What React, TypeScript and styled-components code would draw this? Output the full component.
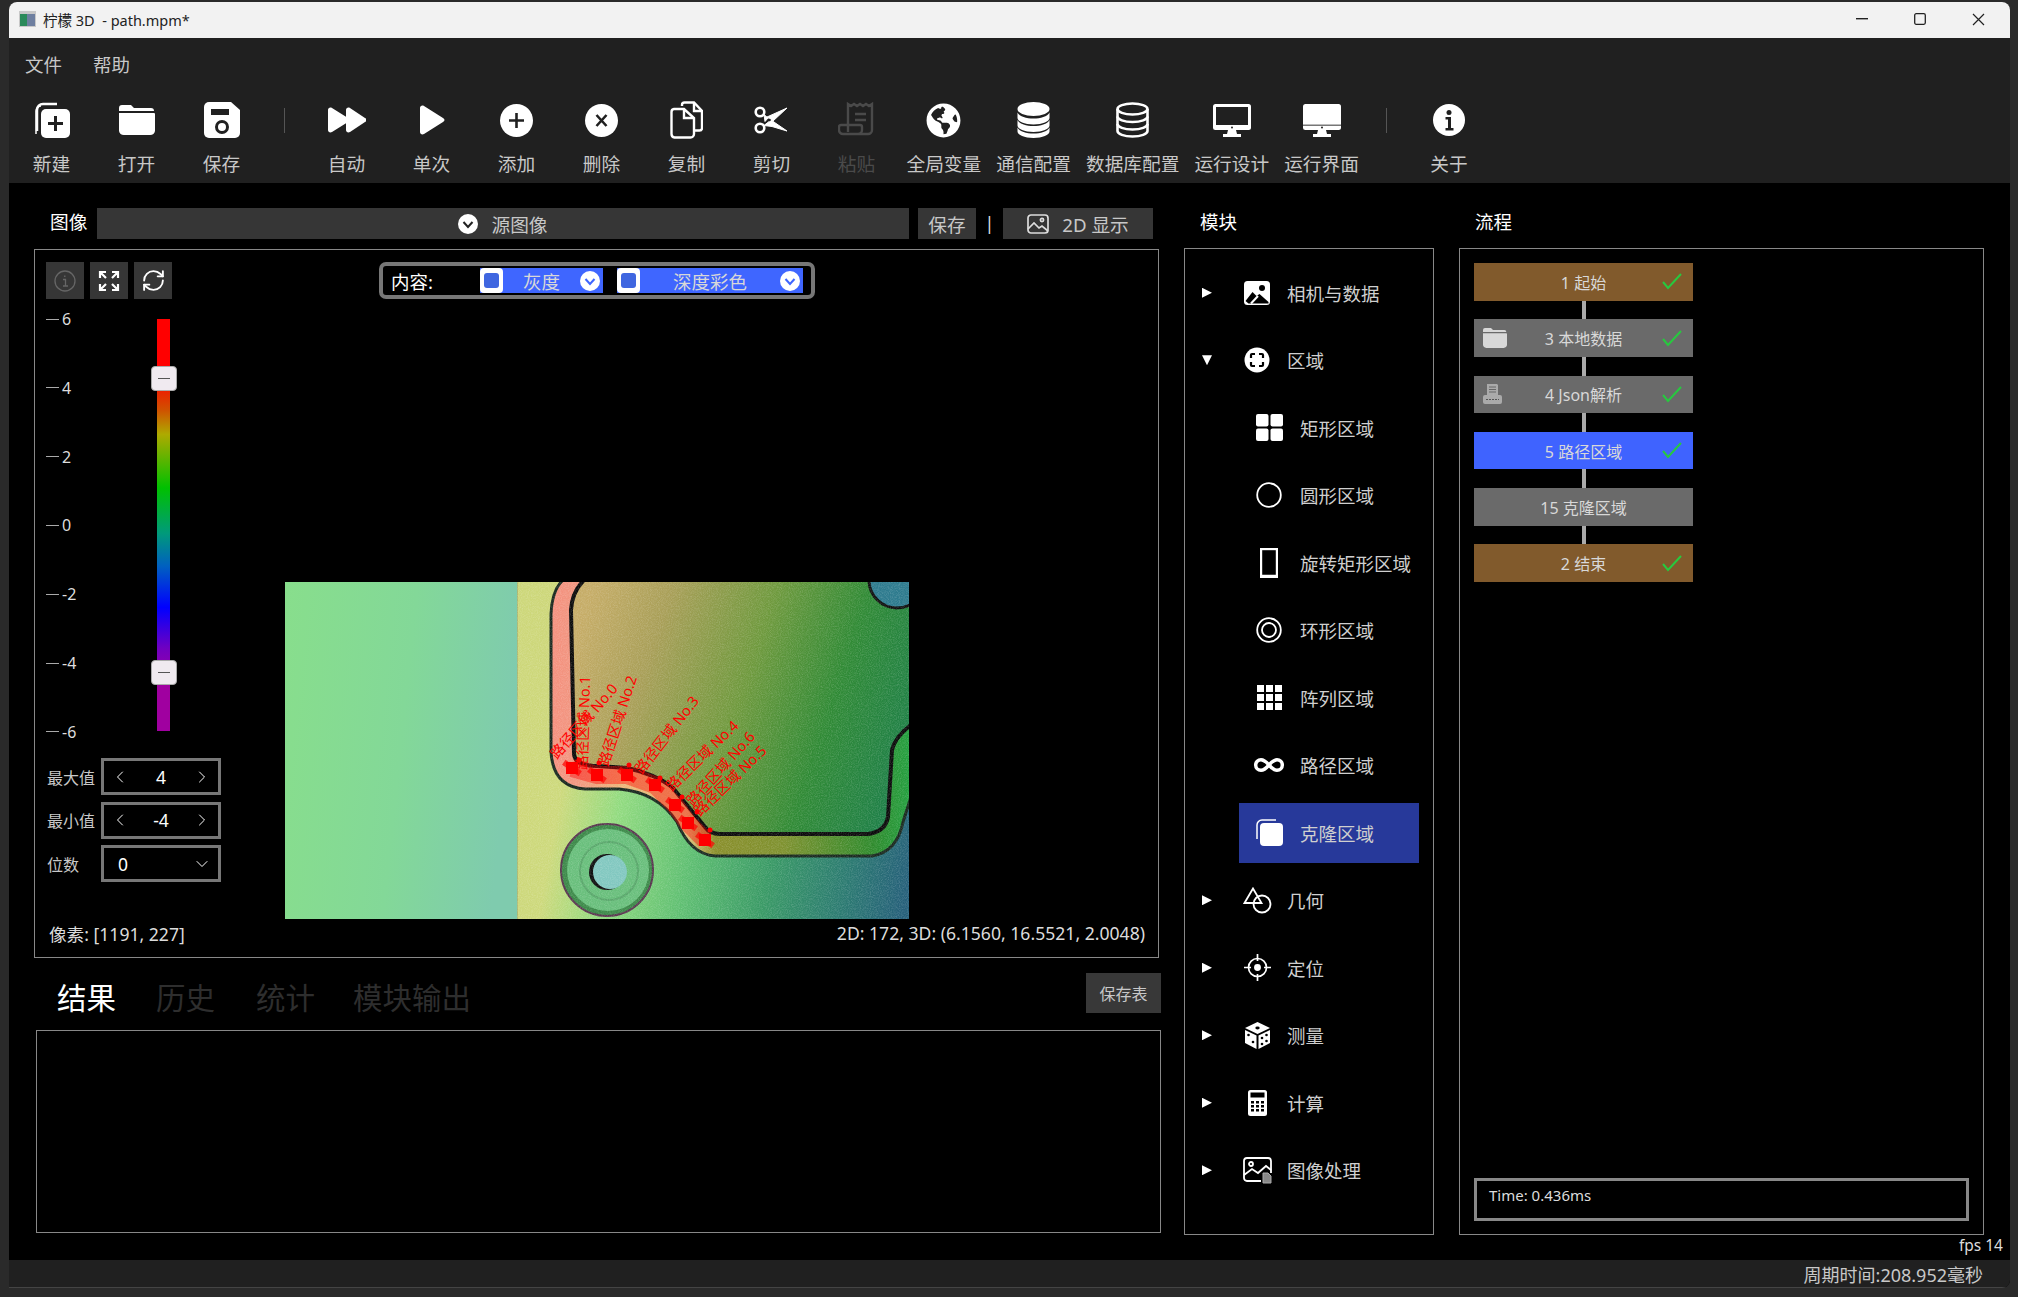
import React from 'react';
import styled, { createGlobalStyle } from 'styled-components';
import { ChevronDown, ChevronLeft, ChevronRight, Infinity as InfinityIcon, RefreshCw } from 'lucide-react';
import { FaGlobeAmericas } from 'react-icons/fa';

const GlobalStyle = createGlobalStyle`
  html, body { margin: 0; padding: 0; background: #2a2a2a; overflow: hidden; }
  body { font-family: "Noto Sans", "Noto Sans CJK SC", sans-serif; }
  * { box-sizing: border-box; }
`;

const Screen = styled.div`
  width: 2018px;
  height: 1297px;
  padding: 2px 8px 9px 9px;
  background: #2a2a2a;
`;

const Window = styled.div`
  height: 100%;
  display: flex;
  flex-direction: column;
  background: #000;
  border-radius: 8px 8px 8px 0;
  overflow: hidden;
`;

const TitleBar = styled.div`
  height: 36px;
  flex: none;
  display: flex;
  align-items: center;
  padding: 0 3px 2px 10px;
  background: #f2f2f2;
  color: #222;
  font-size: 14.5px;
`;

const TitleText = styled.span`
  margin-left: 7px;
  flex: 1;
  white-space: pre;
`;

const WinButton = styled.div`
  width: 58px;
  height: 34px;
  display: flex;
  align-items: center;
  justify-content: center;
`;

const Chrome = styled.div`
  height: 145px;
  flex: none;
  background: #202020;
  color: #c8c8c8;
`;

const MenuRow = styled.div`
  height: 45px;
  display: flex;
  align-items: center;
  padding: 6px 0 0 16px;
  gap: 31px;
  font-size: 18.5px;
`;

const ToolRow = styled.div`
  display: flex;
  padding-top: 17px;
`;

const ToolButton = styled.div<{ $off?: boolean }>`
  min-width: 85px;
  padding: 0 7.5px;
  display: flex;
  flex-direction: column;
  align-items: center;
  color: ${(p) => (p.$off ? '#4a4a4a' : '#c8c8c8')};
  font-size: 18.7px;
  line-height: 24px;
  white-space: nowrap;
  svg { display: block; }
`;

const ToolIcon = styled.div<{ $off?: boolean }>`
  height: 40px;
  margin-bottom: 12px;
  display: flex;
  align-items: center;
  justify-content: center;
  color: ${(p) => (p.$off ? '#4a4a4a' : '#fff')};
`;

const ToolSep = styled.div`
  width: 40px;
  height: 25px;
  margin-top: 8px;
  display: flex;
  justify-content: center;
  &::after { content: ''; width: 1px; background: #555; }
`;

const Main = styled.div`
  flex: 1;
  display: flex;
  flex-direction: column;
  min-height: 0;
  padding-top: 25px;
`;

const Columns = styled.div`
  height: 1027px;
  display: grid;
  grid-template-columns: 1127px 273px 550px;
  padding-left: 25px;
`;

const LeftCol = styled.div`
  display: flex;
  flex-direction: column;
`;

const HeadRow = styled.div`
  height: 31px;
  display: flex;
  align-items: stretch;
  color: #c8c8c8;
  font-size: 18.7px;
`;

const HeadLabel = styled.div`
  width: 63px;
  padding-left: 16px;
  color: #fff;
  line-height: 28px;
`;

const DarkButton = styled.div<{ $w?: number; $grow?: boolean; $ml?: number }>`
  ${(p) => (p.$grow ? 'flex: 1;' : `width: ${p.$w}px;`)}
  margin-left: ${(p) => p.$ml || 0}px;
  display: flex;
  align-items: center;
  justify-content: center;
  gap: 13px;
  background: #363636;
`;

const Pipe = styled.div`
  width: 27px;
  text-align: center;
  line-height: 29px;
  color: #ddd;
`;

const HeadEnd = styled.div`
  width: 8px;
`;

const Viewer = styled.div`
  width: 1125px;
  height: 709px;
  margin-top: 10px;
  padding: 12px 0 0 11px;
  border: 1px solid #888;
  display: flex;
  flex-direction: column;
`;

const ViewTop = styled.div`
  height: 37px;
  display: flex;
  flex: none;
`;

const SquareButton = styled.div<{ $off?: boolean }>`
  width: 38px;
  height: 37px;
  margin-right: 6px;
  display: flex;
  align-items: center;
  justify-content: center;
  background: #363636;
  color: ${(p) => (p.$off ? '#666' : '#fff')};
`;

const ContentBox = styled.div`
  width: 436px;
  margin-left: 201px;
  display: flex;
  align-items: center;
  padding-left: 8px;
  border: 4px solid #777;
  border-radius: 7px;
  color: #fff;
  font-size: 18.5px;
`;

const ContentLabel = styled.span`
  width: 89px;
`;

const BlueCombo = styled.div<{ $w: number; $mr?: number }>`
  width: ${(p) => p.$w}px;
  margin-right: ${(p) => p.$mr || 0}px;
  height: 25px;
  padding-right: 3px;
  display: flex;
  align-items: center;
  background: #3f66ff;
  color: #d8d8d8;
  font-size: 18.5px;
`;

const ComboCheck = styled.div`
  width: 23px;
  height: 25px;
  padding: 5px 4px;
  background: #fff;
  border-radius: 4px;
  &::after {
    content: '';
    display: block;
    height: 15px;
    border-radius: 3px;
    background: #3f66e0;
  }
`;

const ComboText = styled.span`
  flex: 1;
  text-align: center;
`;

const ViewBody = styled.div`
  height: 620px;
  flex: none;
  display: flex;
`;

const Rail = styled.div`
  width: 175px;
  padding-top: 10px;
  font-size: 16px;
  color: #ddd;
`;

const ScaleArea = styled.div`
  height: 433px;
  display: flex;
`;

const Ticks = styled.div`
  width: 111px;
  display: flex;
  flex-direction: column;
  justify-content: space-between;
`;

const Tick = styled.div`
  height: 20px;
  display: flex;
  align-items: center;
  gap: 3px;
  line-height: 20px;
  &::before { content: ''; width: 13px; height: 1px; background: #aaa; }
`;

const SliderTrack = styled.div`
  position: relative;
  width: 13px;
  height: 412px;
  margin-top: 10px;
  background: linear-gradient(
    to bottom,
    #f00 0%,
    #f00 14%,
    #d05000 22%,
    #aeaa00 28%,
    #00c000 41%,
    #009a7a 52%,
    #0060c0 60%,
    #0000ff 70%,
    #7000c0 80%,
    #a000a0 88%,
    #a000a0 100%
  );
`;

const SliderHandle = styled.div<{ $top: number }>`
  position: absolute;
  left: -6px;
  top: ${(p) => p.$top}px;
  width: 26px;
  height: 25px;
  border-radius: 4px;
  border: 1px solid #aaa;
  background: #f0eaf0;
  display: flex;
  align-items: center;
  justify-content: center;
  &::after { content: ''; width: 12px; height: 1px; background: #555; }
`;

const FieldStack = styled.div`
  margin-top: 16px;
  display: flex;
  flex-direction: column;
  gap: 6.5px;
`;

const FieldRow = styled.div`
  display: flex;
  align-items: center;
  color: #c8c8c8;
`;

const FieldLabel = styled.span`
  width: 55px;
  padding-left: 1px;
`;

const FieldBox = styled.div`
  width: 120px;
  height: 37px;
  padding: 0 6px;
  border: 3px solid #777;
  display: flex;
  align-items: center;
  justify-content: space-between;
  color: #fff;
  font-size: 17.5px;
`;

const ComboValue = styled.span`
  margin-left: 8px;
`;

const PictureFrame = styled.div`
  width: 624px;
  height: 337px;
  margin: 283px 0 0 64px;
`;

const ViewFoot = styled.div`
  height: 28px;
  display: flex;
  align-items: center;
  justify-content: space-between;
  padding: 0 13px 0 3px;
  color: #dcdcdc;
  font-size: 17.6px;
`;

const TabsRow = styled.div`
  height: 40px;
  margin-top: 15px;
  padding-left: 23px;
  display: flex;
  align-items: center;
`;

const Tab = styled.span<{ $on?: boolean; $mr: number }>`
  margin: 9px ${(p) => p.$mr}px 0 0;
  color: ${(p) => (p.$on ? '#fff' : '#2e2e2e')};
  font-size: 29.5px;
  line-height: 34px;
`;

const SaveTable = styled.div`
  width: 75px;
  height: 40px;
  margin-left: auto;
  display: flex;
  align-items: center;
  justify-content: center;
  background: #383838;
  color: #c8c8c8;
  font-size: 16px;
`;

const ResultBox = styled.div`
  height: 203px;
  margin: 17px 0 0 2px;
  border: 1px solid #888;
`;

const TreeCol = styled.div`
  display: flex;
  flex-direction: column;
  margin-left: 23px;
`;

const FlowCol = styled(TreeCol)`
  margin-left: 25px;
`;

const ColTitle = styled.div<{ $x: number }>`
  height: 40px;
  flex: none;
  padding-left: ${(p) => p.$x}px;
  color: #fff;
  font-size: 18.5px;
  line-height: 28px;
`;

const TreePanel = styled.div`
  flex: 1;
  border: 1px solid #888;
  padding-top: 10px;
  display: flex;
  flex-direction: column;
  color: #cfcfcf;
  font-size: 18.5px;
`;

const TreeRow = styled.div`
  height: 67.5px;
  flex: none;
  display: flex;
  align-items: center;
  padding-left: 17px;
`;

const Arrow = styled.div<{ $open?: boolean }>`
  width: 10px;
  height: 10px;
  background: #fff;
  clip-path: ${(p) =>
    p.$open ? 'polygon(0 0, 100% 0, 50% 100%)' : 'polygon(0 0, 100% 50%, 0 100%)'};
`;

const TreeIcon = styled.div`
  width: 40px;
  display: flex;
  justify-content: center;
  color: #fff;
  margin: 0 10px 0 25px;
`;

const ChildRow = styled.div<{ $on?: boolean }>`
  width: 180px;
  height: 60px;
  flex: none;
  margin: 3.75px 0 3.75px 54px;
  padding-left: 10px;
  display: flex;
  align-items: center;
  gap: 11px;
  white-space: nowrap;
  background: ${(p) => (p.$on ? '#27399a' : 'transparent')};
`;

const ChildIcon = styled.div`
  width: 40px;
  display: flex;
  justify-content: center;
  color: #fff;
`;

const FlowPanel = styled.div`
  flex: 1;
  border: 1px solid #888;
  padding: 14px 14px 13px;
  display: flex;
  flex-direction: column;
`;

const FlowList = styled.div`
  flex: 1;
  width: 219px;
  display: flex;
  flex-direction: column;
  align-items: center;
`;

const FlowNode = styled.div<{ $tone: string }>`
  width: 100%;
  height: 37.5px;
  flex: none;
  display: grid;
  grid-template-columns: 1fr auto 1fr;
  align-items: center;
  background: ${(p) => p.$tone};
  color: #d8d8d8;
  font-size: 16px;
`;

const NodeIcon = styled.div`
  padding-left: 9px;
  display: flex;
`;

const NodeCheck = styled.div`
  padding-right: 11px;
  display: flex;
  justify-content: flex-end;
`;

const Link = styled.div`
  width: 4px;
  height: 18.8px;
  flex: none;
  background: #aaa;
`;

const TimeBox = styled.div`
  width: 495px;
  height: 43px;
  padding: 2px 0 0 12px;
  border: 3px solid #888;
  color: #dcdcdc;
  font-size: 15px;
  line-height: 24px;
`;

const FpsRow = styled.div`
  height: 25px;
  padding: 0 7px 0 0;
  text-align: right;
  color: #dcdcdc;
  font-size: 15.5px;
  line-height: 20px;
`;

const StatusBar = styled.div`
  height: 28px;
  flex: none;
  padding-right: 27px;
  display: flex;
  align-items: center;
  justify-content: flex-end;
  background: #202020;
  border-bottom: 1px solid #444;
  color: #c8c8c8;
  font-size: 18px;
`;

const Glyph: React.FC<{ w?: number; h?: number; vb: string; children: React.ReactNode }> = ({ w = 36, h = 36, vb, children }) => (
  <svg width={w} height={h} viewBox={vb} fill="currentColor">{children}</svg>
);

const NewIcon = () => (
  <Glyph vb="0 0 36 36">
    <path d="M3 29V8a6 6 0 0 1 6-6h14" fill="none" stroke="currentColor" strokeWidth="2.5" />
    <path d="M2 32V9a5 5 0 0 1 5-5" fill="none" stroke="currentColor" strokeWidth="1.5" />
    <rect x="7" y="7" width="29" height="29" rx="5" />
    <path d="M21.5 14v15M14 21.5h15" stroke="#202020" strokeWidth="3" />
  </Glyph>
);
const FolderIcon: React.FC<{ size?: number }> = ({ size = 36 }) => (
  <Glyph w={size} h={size} vb="0 0 36 36">
    <path d="M0 9V6a3 3 0 0 1 3-3h9l3 3h17a3 3 0 0 1 3 3z" />
    <path d="M0 11h35a1 1 0 0 1 1 1v17a5 5 0 0 1-5 4H5a5 5 0 0 1-5-4z" />
  </Glyph>
);
const SaveIcon = () => (
  <Glyph vb="0 0 36 36">
    <path d="M5 0h22l9 8v23a5 5 0 0 1-5 5H5a5 5 0 0 1-5-5V5a5 5 0 0 1 5-5z" />
    <rect x="7" y="7" width="18" height="6" fill="#202020" />
    <circle cx="18" cy="25" r="5.5" fill="none" stroke="#202020" strokeWidth="3" />
  </Glyph>
);
const AutoIcon = () => (
  <Glyph w={39} h={26} vb="0 0 39 26">
    <path d="M1 3c0-2 2-3 4-2l16 10c2 1 2 3 0 4L5 25c-2 1-4 0-4-2z" />
    <path d="M19 3c0-2 2-3 4-2l15 10c2 1 2 3 0 4L23 25c-2 1-4 0-4-2z" />
  </Glyph>
);
const PlayIcon = () => (
  <Glyph w={26} h={30} vb="0 0 26 30">
    <path d="M1 3c0-2 2-3 4-2l19 12c2 1 2 3 0 4L5 29c-2 1-4 0-4-2z" />
  </Glyph>
);
const AddIcon = () => (
  <Glyph w={33} h={33} vb="0 0 33 33">
    <circle cx="16.5" cy="16.5" r="16.5" />
    <path d="M16.5 9v15M9 16.5h15" stroke="#202020" strokeWidth="2.6" />
  </Glyph>
);
const RemoveIcon = () => (
  <Glyph w={33} h={33} vb="0 0 33 33">
    <circle cx="16.5" cy="16.5" r="16.5" />
    <path d="M11.5 11l10 11M21.5 11l-10 11" stroke="#202020" strokeWidth="2.6" />
  </Glyph>
);
const CopyIcon = () => (
  <svg width="33" height="38" viewBox="0 0 33 38" fill="none" stroke="currentColor" strokeWidth="2.4">
    <path d="M12 5V4a2.5 2.5 0 0 1 2.5-2.5H24L32 10v17a2.5 2.5 0 0 1-2.5 2.5H25" />
    <path d="M24 2v8h7" />
    <path d="M4 8h10l10 9v16a3.5 3.5 0 0 1-3.5 3.5H4.500A3.500 3.500 0 0 1 1.500 33V11a3 3 0 0 1 2.500-3z" />
    <path d="M14 8v9h9" />
  </svg>
);
const ScissorsIcon = () => (
  <svg width="35" height="28" viewBox="0 0 35 28" fill="none" stroke="currentColor">
    <circle cx="6" cy="6" r="4.300" strokeWidth="2.600" />
    <circle cx="6" cy="22" r="4.300" strokeWidth="2.600" />
    <path d="M10 8.500L14 12l-3 3.500z" fill="currentColor" strokeWidth="1" />
    <path d="M13 11L33 2 19 15z" fill="currentColor" strokeWidth="1" />
    <path d="M10 19.500L17 14l16 11-15-4.500z" fill="currentColor" strokeWidth="1" />
    <circle cx="15.500" cy="14" r="1.300" fill="#202020" stroke="none" />
  </svg>
);
const PasteIcon = () => (
  <svg width="38" height="36" viewBox="0 0 38 36" fill="none" stroke="currentColor" strokeWidth="2.4">
    <path d="M10 30V2l3 2 3-2 3 2 3-2 3 2 3-2 3 2 3-2v26a4 4 0 0 1-4 4H5a4 4 0 0 1-4-4v-3a2 2 0 0 1 2-2h19a2 2 0 0 1 2 2v3a4 4 0 0 1-4 4" />
    <path d="M17 12h11M17 18h11" />
  </svg>
);
const DbSolidIcon = () => (
  <Glyph w={33} h={36} vb="0 0 33 36">
    <ellipse cx="16.500" cy="7" rx="16" ry="7" />
    <path d="M0.500 10.500c2 4 9 6 16 6s14-2 16-6v5.500c0 3.500-7 6.500-16 6.500s-16-3-16-6.500z" />
    <path d="M0.500 18c2 4 9 6 16 6s14-2 16-6v5.500c0 3.500-7 6.500-16 6.500s-16-3-16-6.500z" />
    <path d="M0.500 25.500c2 4 9 6 16 6s14-2 16-6v4c0 3.500-7 6.500-16 6.500s-16-3-16-6.500z" />
  </Glyph>
);
const DbOutlineIcon = () => (
  <svg width="33" height="36" viewBox="0 0 33 36" fill="none" stroke="currentColor" strokeWidth="2.6">
    <ellipse cx="16.500" cy="7" rx="15" ry="5.500" />
    <path d="M1.500 7v22c0 3 6.500 5.500 15 5.500s15-2.500 15-5.500V7" />
    <path d="M1.500 14.500c0 3 6.500 5.500 15 5.500s15-2.500 15-5.500M1.500 22c0 3 6.500 5.500 15 5.500s15-2.500 15-5.500" />
  </svg>
);
const MonitorIcon: React.FC<{ solid?: boolean }> = ({ solid }) => (
  <Glyph w={38} h={33} vb="0 0 38 33">
    <rect x="0" y="0" width="38" height="26" rx="2.500" />
    {solid ? (
      <rect x="0" y="20.500" width="38" height="1.500" fill="#777" />
    ) : (
      <rect x="3" y="3" width="32" height="18" fill="#202020" />
    )}
    <circle cx="19" cy="23.500" r="1" fill="#202020" />
    <path d="M15 26h8l1 4h4v3H10v-3h4z" />
  </Glyph>
);
const InfoIcon = () => (
  <Glyph w={32} h={32} vb="0 0 32 32">
    <circle cx="16" cy="16" r="16" />
    <circle cx="16" cy="8.500" r="2.500" fill="#202020" />
    <path d="M12.500 13h5.500v11h2.500v2.500h-8V24H15v-8.500h-2.500z" fill="#202020" />
  </Glyph>
);
const ChevronDot: React.FC<{ size?: number; tone?: string }> = ({ size = 20, tone = '#222' }) => (
  <svg width={size} height={size} viewBox="0 0 20 20">
    <circle cx="10" cy="10" r="10" fill="#fff" />
    <path d="M5.500 8l4.500 5 4.500-5" fill="none" stroke={tone} strokeWidth="2" />
  </svg>
);
const PhotoOutline = () => (
  <svg width="22" height="20" viewBox="0 0 22 20" fill="none" stroke="#ddd" strokeWidth="1.700">
    <rect x="1" y="1" width="20" height="18" rx="3" />
    <circle cx="15" cy="6" r="1.600" />
    <path d="M1 15l6-6 5 5 3-2 6 5" />
  </svg>
);
const InfoRing = () => (
  <svg width="22" height="22" viewBox="0 0 22 22" fill="none" stroke="currentColor" strokeWidth="1.300">
    <circle cx="11" cy="11" r="10" />
    <path d="M9 9.500h2.500v6M9 16h5M10.800 5.500v1.500" />
  </svg>
);
const FitIcon = () => (
  <svg width="22" height="22" viewBox="0 0 22 22" fill="none" stroke="currentColor" strokeWidth="2.200">
    <path d="M2 8V2h6M2 2l6 6M14 2h6v6M20 2l-6 6M2 14v6h6M2 20l6-6M20 14v6h-6M20 20l-6-6" />
  </svg>
);
const PhotoSolid = () => (
  <Glyph w={26} h={24} vb="0 0 26 24">
    <rect x="0" y="0" width="26" height="24" rx="3.500" />
    <circle cx="18" cy="7" r="3" fill="#000" />
    <path d="M1.500 20l7-9 4 4 3-2 9 8v1.500h-20z" fill="#000" />
    <path d="M7 22.500l7-7.500" stroke="#fff" strokeWidth="2" />
  </Glyph>
);
const FocusIcon = () => (
  <Glyph w={26} h={26} vb="0 0 26 26">
    <circle cx="13" cy="13" r="12.500" />
    <path d="M7 11V8a1 1 0 0 1 1-1h3M15 7h3a1 1 0 0 1 1 1v3M19 15v3a1 1 0 0 1-1 1h-3M11 19H8a1 1 0 0 1-1-1v-3" fill="none" stroke="#000" strokeWidth="2.200" />
  </Glyph>
);
const QuadIcon = () => (
  <Glyph w={27} h={27} vb="0 0 27 27">
    <rect width="12.500" height="12.500" rx="2" />
    <rect x="14.500" width="12.500" height="12.500" rx="2" />
    <rect y="14.500" width="12.500" height="12.500" rx="2" />
    <rect x="14.500" y="14.500" width="12.500" height="12.500" rx="2" />
  </Glyph>
);
const CircleIcon = () => (
  <svg width="26" height="26" viewBox="0 0 26 26" fill="none" stroke="#fff" strokeWidth="1.800">
    <circle cx="13" cy="13" r="11.800" />
  </svg>
);
const TallIcon = () => (
  <svg width="18" height="30" viewBox="0 0 18 30" fill="none" stroke="#fff" strokeWidth="2.200">
    <rect x="1.100" y="1.100" width="15.800" height="27.800" />
    <path d="M0 28h18" strokeWidth="2.500" />
  </svg>
);
const RingIcon = () => (
  <svg width="26" height="26" viewBox="0 0 26 26" fill="none" stroke="#fff">
    <circle cx="13" cy="13" r="11.800" strokeWidth="1.800" />
    <circle cx="13" cy="13" r="7" strokeWidth="1.800" />
  </svg>
);
const GridIcon = () => (
  <Glyph w={25} h={25} vb="0 0 25 25">
    {[0, 9, 18].map((y) =>
      [0, 9, 18].map((x) => <rect key={`${x}-${y}`} x={x} y={y} width="7" height="7" />)
    )}
  </Glyph>
);
const CloneIcon = () => (
  <Glyph w={27} h={27} vb="0 0 27 27">
    <path d="M1 20V6a5 5 0 0 1 5-5h14" fill="none" stroke="currentColor" strokeWidth="1.500" />
    <rect x="4" y="4" width="23" height="23" rx="4" />
  </Glyph>
);
const ShapesIcon = () => (
  <svg width="29" height="27" viewBox="0 0 29 27" fill="none" stroke="#fff" strokeWidth="1.800">
    <path d="M10 1.500L1.500 16h17z" />
    <circle cx="19" cy="17" r="8.500" />
  </svg>
);
const TargetIcon = () => (
  <svg width="27" height="27" viewBox="0 0 27 27" fill="none" stroke="#fff" strokeWidth="1.700">
    <circle cx="13.500" cy="13.500" r="9" />
    <circle cx="13.500" cy="13.500" r="2.600" fill="#fff" />
    <path d="M13.500 0v7M13.500 20v7M0 13.500h7M20 13.500h7" />
  </svg>
);
const DiceIcon = () => (
  <Glyph w={25} h={27} vb="0 0 25 27">
    <path d="M12.500 0L25 6 12.500 12 0 6z" />
    <path d="M0 8l11.500 5.500V27L0 21z" />
    <path d="M25 8l-11.500 5.500V27L25 21z" />
    <ellipse cx="12.500" cy="6" rx="2.200" ry="1.400" fill="#000" />
    <circle cx="3.500" cy="13" r="1.300" fill="#000" />
    <circle cx="8" cy="20" r="1.300" fill="#000" />
    <circle cx="17" cy="16" r="1.300" fill="#000" />
    <circle cx="21.500" cy="13" r="1.300" fill="#000" />
    <circle cx="17" cy="22" r="1.300" fill="#000" />
    <circle cx="21.500" cy="19" r="1.300" fill="#000" />
  </Glyph>
);
const CalcIcon = () => (
  <Glyph w={19} h={26} vb="0 0 19 26">
    <rect width="19" height="26" rx="2.500" />
    <rect x="2.500" y="2.500" width="14" height="5" fill="#000" />
    {[11, 15, 19].map((y) =>
      [3, 8, 13].map((x) => <rect key={`${x}-${y}`} x={x} y={y} width="3" height="2.500" fill="#000" />)
    )}
  </Glyph>
);
const ProcessIcon = () => (
  <svg width="29" height="27" viewBox="0 0 29 27" fill="none" stroke="#fff" strokeWidth="1.800">
    <path d="M18 24H4a3 3 0 0 1-3-3V4a3 3 0 0 1 3-3h21a3 3 0 0 1 3 3v12" />
    <circle cx="8" cy="7" r="2" />
    <path d="M1 18l8-6 6 4 8-7 5 4" />
    <path d="M20 16h5l3 3v7h-8z" fill="#888" stroke="#aaa" strokeWidth="1" />
  </svg>
);
const JsonDoc = () => (
  <svg width="19" height="20" viewBox="0 0 19 20">
    <path d="M4 0h10l1 1v10H4z" fill="#aaa" />
    <path d="M6 3h7M6 5.500h7M6 8h7" stroke="#666" />
    <rect x="0" y="11" width="19" height="9" rx="2" fill="#aaa" />
    <path d="M3 15.500h13" stroke="#555" strokeDasharray="2 1" />
  </svg>
);
const Check = () => (
  <svg width="20" height="17" viewBox="0 0 20 17" fill="none" stroke="#27c93f" strokeWidth="2">
    <path d="M1 9l5 6L19 1" />
  </svg>
);

const dots = [[287, 186], [312, 193], [342, 193], [370, 203], [390, 223], [403, 241], [420, 258]];
const points = [[294, 178], [314, 181], [344, 183], [375, 196], [397, 215], [412, 230], [425, 248]];
const labels = [
  { n: 1, x: 302, y: 188, r: -88 },
  { n: 0, x: 272, y: 178, r: -49 },
  { n: 2, x: 323, y: 185, r: -72 },
  { n: 3, x: 357, y: 193, r: -52 },
  { n: 4, x: 387, y: 210, r: -44 },
  { n: 6, x: 408, y: 225, r: -48 },
  { n: 5, x: 415, y: 235, r: -44 },
];

// depth map of the scanned part, painted by hand
const DepthPicture = () => (
  <svg width="624" height="337" viewBox="0 0 624 337" style={{ display: 'block' }}>
    <defs>
      <linearGradient id="flat" x1="0" x2="1" y1="0" y2="0.15">
        <stop offset="0" stopColor="#88de8c" />
        <stop offset="0.55" stopColor="#83d898" />
        <stop offset="1" stopColor="#7fcbae" />
      </linearGradient>
      <linearGradient id="plate" gradientUnits="userSpaceOnUse" x1="232" x2="624" y1="230" y2="300">
        <stop offset="0" stopColor="#cdd77a" />
        <stop offset="0.1" stopColor="#cdd97c" />
        <stop offset="0.25" stopColor="#92db80" />
        <stop offset="0.45" stopColor="#5fbf72" />
        <stop offset="0.65" stopColor="#3a9a66" />
        <stop offset="0.85" stopColor="#2c7a72" />
        <stop offset="1" stopColor="#26607a" />
      </linearGradient>
      <linearGradient id="channel" gradientUnits="userSpaceOnUse" x1="266" x2="624" y1="0" y2="0">
        <stop offset="0" stopColor="#f5917f" />
        <stop offset="0.07" stopColor="#f19680" />
        <stop offset="0.2" stopColor="#ecb679" />
        <stop offset="0.38" stopColor="#dfc37b" />
        <stop offset="0.46" stopColor="#8a8f2c" />
        <stop offset="0.65" stopColor="#7f9230" />
        <stop offset="0.9" stopColor="#2f8b2d" />
        <stop offset="1" stopColor="#25a040" />
      </linearGradient>
      <linearGradient id="pocket" gradientUnits="userSpaceOnUse" x1="289" x2="624" y1="60" y2="170">
        <stop offset="0" stopColor="#c6ad68" />
        <stop offset="0.22" stopColor="#a89f58" />
        <stop offset="0.5" stopColor="#6f9a3e" />
        <stop offset="0.75" stopColor="#318b36" />
        <stop offset="1" stopColor="#1f8049" />
      </linearGradient>
      <filter id="grain" x="0" y="0" width="100%" height="100%">
        <feTurbulence type="fractalNoise" baseFrequency="0.9" numOctaves="2" seed="4" />
        <feColorMatrix values="0 0 0 0 1  0 0 0 0 1  0 0 0 0 1  1.600 0 0 0 -0.600" />
      </filter>
      <clipPath id="plateClip"><rect x="232" width="392" height="337" /></clipPath>
    </defs>
    <rect width="236" height="337" fill="url(#flat)" />
    <g clipPath="url(#plateClip)">
      <rect x="232" width="392" height="337" fill="url(#plate)" />
      <path d="M232 0v337" stroke="#8d9a6c" strokeWidth="1" />
      <path d="M278 -2Q267 8 266 32L266 170Q268 205 300 207L334 207Q372 210 392 240Q405 272 430 274L587 274Q612 270 618 240L626 215V-2Z" fill="url(#channel)" stroke="#1a2a20" strokeWidth="3" />
      <path d="M299 -2Q287 10 286 28L289 172Q290 184 313 184L342 186Q370 192 387 205L420 245Q425 252 435 252L583 252Q600 250 603 235L607 168Q610 155 626 143V-2Z" fill="url(#pocket)" stroke="#0c0c0c" strokeWidth="4" />
      <circle cx="612" cy="-2" r="28" fill="#2e7b8e" stroke="#111" strokeWidth="3" />
      <circle cx="322" cy="288" r="46" fill="#3d8a4a" stroke="#5a3850" strokeWidth="2" />
      <circle cx="323" cy="288" r="41" fill="#69bf7c" />
      <circle cx="324" cy="289" r="29" fill="none" stroke="#5aa86c" strokeWidth="2" />
      <circle cx="322" cy="290" r="18" fill="#111" />
      <circle cx="325" cy="290" r="17" fill="#82c8c0" />
      <rect x="232" width="392" height="337" filter="url(#grain)" opacity="0.22" />
      <path d="M287 186L312 193L342 193L370 203L390 223L403 241L420 258" fill="none" stroke="#ff0000" strokeOpacity="0.4" strokeWidth="18" />
      {dots.map(([x, y]) => (
        <rect key={`d${x}`} x={x - 6} y={y - 6} width="12" height="12" fill="#ff0000" />
      ))}
      {dots.map(([x, y]) => (
        <rect key={`o${x}`} x={x - 10} y={y - 3} width="20" height="6" fill="#ff0000" transform={`rotate(35 ${x} ${y})`} fillOpacity="0.7" />
      ))}
      {points.map(([x, y]) => (
        <circle key={`p${x}`} cx={x} cy={y} r="2.500" fill="#ff0000" />
      ))}
      {labels.map((l) => (
        <text
          key={l.n}
          x={l.x}
          y={l.y}
          transform={`rotate(${l.r} ${l.x} ${l.y})`}
          fill="#ff0000"
          fontSize="14.5"
          fontFamily="'Noto Sans', 'Noto Sans CJK SC', sans-serif"
        >
          路径区域 No.{l.n}
        </text>
      ))}
    </g>
  </svg>
);

const tools = [
  { label: '新建', icon: <NewIcon /> },
  { label: '打开', icon: <FolderIcon /> },
  { label: '保存', icon: <SaveIcon /> },
  { sep: true },
  { label: '自动', icon: <AutoIcon /> },
  { label: '单次', icon: <PlayIcon /> },
  { label: '添加', icon: <AddIcon /> },
  { label: '删除', icon: <RemoveIcon /> },
  { label: '复制', icon: <CopyIcon /> },
  { label: '剪切', icon: <ScissorsIcon /> },
  { label: '粘贴', icon: <PasteIcon />, off: true },
  { label: '全局变量', icon: <FaGlobeAmericas size={35} /> },
  { label: '通信配置', icon: <DbSolidIcon /> },
  { label: '数据库配置', icon: <DbOutlineIcon /> },
  { label: '运行设计', icon: <MonitorIcon /> },
  { label: '运行界面', icon: <MonitorIcon solid /> },
  { sep: true },
  { label: '关于', icon: <InfoIcon /> },
];

const ticks = ['6', '4', '2', '0', '-2', '-4', '-6'];

const regionChildren = [
  { label: '矩形区域', icon: <QuadIcon /> },
  { label: '圆形区域', icon: <CircleIcon /> },
  { label: '旋转矩形区域', icon: <TallIcon /> },
  { label: '环形区域', icon: <RingIcon /> },
  { label: '阵列区域', icon: <GridIcon /> },
  { label: '路径区域', icon: <InfinityIcon size={32} strokeWidth={2.6} /> },
  { label: '克隆区域', icon: <CloneIcon />, on: true },
];

const lowerGroups = [
  { label: '几何', icon: <ShapesIcon /> },
  { label: '定位', icon: <TargetIcon /> },
  { label: '测量', icon: <DiceIcon /> },
  { label: '计算', icon: <CalcIcon /> },
  { label: '图像处理', icon: <ProcessIcon /> },
];

const BROWN = '#815a2c';
const GRAY = '#6a6a6a';
const BLUE = '#3f63ff';

const flow = [
  { label: '1 起始', tone: BROWN, done: true },
  { label: '3 本地数据', tone: GRAY, done: true, icon: <FolderIcon size={24} /> },
  { label: '4 Json解析', tone: GRAY, done: true, icon: <JsonDoc /> },
  { label: '5 路径区域', tone: BLUE, done: true },
  { label: '15 克隆区域', tone: GRAY },
  { label: '2 结束', tone: BROWN, done: true },
];

export default function App() {
  return (
    <Screen>
      <GlobalStyle />
      <Window>
        <TitleBar>
          <svg width="17" height="16" viewBox="0 0 17 16">
            <rect width="17" height="16" fill="#c8c8c8" />
            <rect x="1" y="3" width="7" height="12" fill="#2a8a5a" />
            <rect x="8" y="3" width="8" height="12" fill="#6e7fa0" />
          </svg>
          <TitleText>柠檬 3D  - path.mpm*</TitleText>
          <WinButton>
            <svg width="12" height="2"><rect width="12" height="1.400" fill="#222" /></svg>
          </WinButton>
          <WinButton>
            <svg width="12" height="12" fill="none" stroke="#222" strokeWidth="1.300"><rect x="0.700" y="0.700" width="10.600" height="10.600" rx="1.500" /></svg>
          </WinButton>
          <WinButton>
            <svg width="13" height="13" fill="none" stroke="#222" strokeWidth="1.200"><path d="M1 1l11 11M12 1L1 12" /></svg>
          </WinButton>
        </TitleBar>

        <Chrome>
          <MenuRow>
            <span>文件</span>
            <span>帮助</span>
          </MenuRow>
          <ToolRow>
            {tools.map((t, i) =>
              t.sep ? (
                <ToolSep key={i} />
              ) : (
                <ToolButton key={i} $off={t.off}>
                  <ToolIcon $off={t.off}>{t.icon}</ToolIcon>
                  {t.label}
                </ToolButton>
              )
            )}
          </ToolRow>
        </Chrome>

        <Main>
          <Columns>
            <LeftCol>
              <HeadRow>
                <HeadLabel>图像</HeadLabel>
                <DarkButton $grow>
                  <ChevronDot />
                  源图像
                </DarkButton>
                <DarkButton $w={58} $ml={9}>保存</DarkButton>
                <Pipe>|</Pipe>
                <DarkButton $w={150}>
                  <PhotoOutline />
                  2D 显示
                </DarkButton>
                <HeadEnd />
              </HeadRow>

              <Viewer>
                <ViewTop>
                  <SquareButton $off><InfoRing /></SquareButton>
                  <SquareButton><FitIcon /></SquareButton>
                  <SquareButton><RefreshCw size={25} strokeWidth={1.8} /></SquareButton>
                  <ContentBox>
                    <ContentLabel>内容:</ContentLabel>
                    <BlueCombo $w={123} $mr={14}>
                      <ComboCheck />
                      <ComboText>灰度</ComboText>
                      <ChevronDot size={20} tone="#3f66ff" />
                    </BlueCombo>
                    <BlueCombo $w={186}>
                      <ComboCheck />
                      <ComboText>深度彩色</ComboText>
                      <ChevronDot size={20} tone="#3f66ff" />
                    </BlueCombo>
                  </ContentBox>
                </ViewTop>

                <ViewBody>
                  <Rail>
                    <ScaleArea>
                      <Ticks>
                        {ticks.map((t) => (
                          <Tick key={t}>{t}</Tick>
                        ))}
                      </Ticks>
                      <SliderTrack>
                        <SliderHandle $top={47} />
                        <SliderHandle $top={341} />
                      </SliderTrack>
                    </ScaleArea>
                    <FieldStack>
                      <FieldRow>
                        <FieldLabel>最大值</FieldLabel>
                        <FieldBox>
                          <ChevronLeft size={20} strokeWidth={1.2} />4<ChevronRight size={20} strokeWidth={1.2} />
                        </FieldBox>
                      </FieldRow>
                      <FieldRow>
                        <FieldLabel>最小值</FieldLabel>
                        <FieldBox>
                          <ChevronLeft size={20} strokeWidth={1.2} />-4<ChevronRight size={20} strokeWidth={1.2} />
                        </FieldBox>
                      </FieldRow>
                      <FieldRow>
                        <FieldLabel>位数</FieldLabel>
                        <FieldBox>
                          <ComboValue>0</ComboValue>
                          <ChevronDown size={20} strokeWidth={1.2} />
                        </FieldBox>
                      </FieldRow>
                    </FieldStack>
                  </Rail>
                  <PictureFrame>
                    <DepthPicture />
                  </PictureFrame>
                </ViewBody>

                <ViewFoot>
                  <span>像素: [1191, 227]</span>
                  <span>2D: 172, 3D: (6.1560, 16.5521, 2.0048)</span>
                </ViewFoot>
              </Viewer>

              <TabsRow>
                <Tab $on $mr={40}>结果</Tab>
                <Tab $mr={41}>历史</Tab>
                <Tab $mr={38}>统计</Tab>
                <Tab $mr={0}>模块输出</Tab>
                <SaveTable>保存表</SaveTable>
              </TabsRow>
              <ResultBox />
            </LeftCol>

            <TreeCol>
              <ColTitle $x={16}>模块</ColTitle>
              <TreePanel>
                <TreeRow>
                  <Arrow />
                  <TreeIcon><PhotoSolid /></TreeIcon>
                  相机与数据
                </TreeRow>
                <TreeRow>
                  <Arrow $open />
                  <TreeIcon><FocusIcon /></TreeIcon>
                  区域
                </TreeRow>
                {regionChildren.map((c) => (
                  <ChildRow key={c.label} $on={c.on}>
                    <ChildIcon>{c.icon}</ChildIcon>
                    {c.label}
                  </ChildRow>
                ))}
                {lowerGroups.map((g) => (
                  <TreeRow key={g.label}>
                    <Arrow />
                    <TreeIcon>{g.icon}</TreeIcon>
                    {g.label}
                  </TreeRow>
                ))}
              </TreePanel>
            </TreeCol>

            <FlowCol>
              <ColTitle $x={16}>流程</ColTitle>
              <FlowPanel>
                <FlowList>
                  {flow.map((n, i) => (
                    <React.Fragment key={n.label}>
                      {i > 0 && <Link />}
                      <FlowNode $tone={n.tone}>
                        <NodeIcon>{n.icon}</NodeIcon>
                        <span>{n.label}</span>
                        <NodeCheck>{n.done && <Check />}</NodeCheck>
                      </FlowNode>
                    </React.Fragment>
                  ))}
                </FlowList>
                <TimeBox>Time: 0.436ms</TimeBox>
              </FlowPanel>
            </FlowCol>
          </Columns>
          <FpsRow>fps 14</FpsRow>
        </Main>

        <StatusBar>周期时间:208.952毫秒</StatusBar>
      </Window>
    </Screen>
  );
}
